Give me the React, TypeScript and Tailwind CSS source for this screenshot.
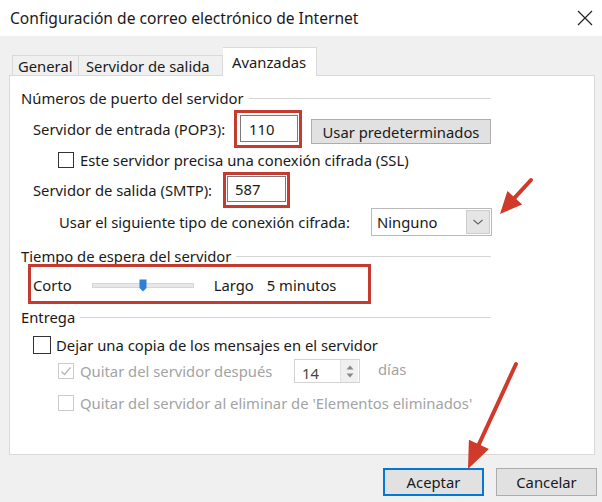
import React from "react";

const font = "font-['Noto_Sans',sans-serif]";

const SectionHeader = ({ title, className = "" }: { title: string; className?: string }) => (
  <div className={`flex items-center w-[470px] h-[20px] ${className}`}>
    <span className="leading-[20px] whitespace-nowrap">{title}</span>
    <div className="flex-1 h-px bg-[#d5d5d5] ml-[5px] mt-[1px]" />
  </div>
);

const CheckBox = ({
  checked = false,
  disabled = false,
  className = "",
}: {
  checked?: boolean;
  disabled?: boolean;
  className?: string;
}) => (
  <div
    className={`w-[16px] h-[16px] shrink-0 border flex items-center justify-center bg-white ${
      disabled ? "border-[#cccccc]" : "border-[#333333]"
    } ${className}`}
  >
    {checked && (
      <svg width="12" height="12" viewBox="0 0 12 12">
        <path d="M1.5 6.5 L4.5 9.5 L10.5 2.5" fill="none" stroke="#b5b5b5" strokeWidth="1.3" />
      </svg>
    )}
  </div>
);

export default function App() {
  return (
    <div className={`relative w-[602px] h-[502px] overflow-hidden bg-[#f0f0f0] text-[#1a1a1a] text-[14.8px] ${font}`}>
      {/* title bar */}
      <div className="h-[36px] bg-white flex items-center justify-between pl-[10px] pr-[9px]">
        <span className="text-[15.6px] leading-[20px]">
          Configuración de correo electrónico de Internet
        </span>
        <svg width="16" height="16" viewBox="0 0 16 16">
          <path d="M1 1 L15 15 M15 1 L1 15" stroke="#222" strokeWidth="1.2" />
        </svg>
      </div>

      {/* tabs */}
      <div className="flex items-end ml-[12px] mt-[11px] h-[28px] relative z-10">
        <div className="h-[20px] pl-[5px] border border-r-0 border-b-0 border-[#d9d9d9] bg-[#f0f0f0] flex items-center leading-[18px] w-[66px] whitespace-nowrap">
          General
        </div>
        <div className="h-[20px] pl-[7px] border border-b-0 border-[#d9d9d9] bg-[#f0f0f0] flex items-center leading-[18px] w-[145px] whitespace-nowrap">
          Servidor de salida
        </div>
        <div className="h-[29px] -mb-px pl-[9px] border border-l-0 border-b-0 border-[#d9d9d9] bg-white flex items-start pt-[4px] leading-[20px] w-[94px]">
          Avanzadas
        </div>
      </div>

      {/* panel */}
      <div className="ml-[9px] w-[586px] h-[380px] bg-white border border-[#d9d9d9] pl-[11px] pt-[12px] flex flex-col">
        <SectionHeader title="Números de puerto del servidor" />

        {/* POP3 */}
        <div className="flex items-start mt-[2px] h-[38px]">
          <span className="ml-[12px] w-[201px] mt-[9px] leading-[20px] whitespace-nowrap">Servidor de entrada (POP3):</span>
          <div className="border-[3px] border-[#c53b30] pt-[2px] pb-[3px] pl-[3px] pr-[1px]">
            <div className="w-[58px] h-[27px] border border-[#7a7a7a] bg-white flex items-center pl-[8px] leading-[20px]">
              110
            </div>
          </div>
          <div className="ml-[9px] mt-[9px] w-[180px] h-[25px] bg-[#e1e1e1] border border-[#adadad] flex items-center justify-center leading-[20px]">
            Usar predeterminados
          </div>
        </div>

        {/* SSL */}
        <div className="flex items-center mt-[3px] h-[18px]">
          <CheckBox className="ml-[37px]" />
          <span className="ml-[6px] leading-[20px]">Este servidor precisa una conexión cifrada (SSL)</span>
        </div>

        {/* SMTP */}
        <div className="flex items-center mt-[3px] h-[36px]">
          <span className="ml-[12px] w-[190px] leading-[20px] whitespace-nowrap">Servidor de salida (SMTP):</span>
          <div className="border-[3px] border-[#c53b30] pt-[1px] pb-[3px] pl-[1px] pr-[1px]">
            <div className="w-[59px] h-[26px] border border-[#7a7a7a] bg-white flex items-center pl-[7px] leading-[20px]">
              587
            </div>
          </div>
        </div>

        {/* encryption */}
        <div className="flex items-center h-[28px]">
          <span className="ml-[38px] w-[312px] leading-[20px] whitespace-nowrap">Usar el siguiente tipo de conexión cifrada:</span>
          <div className="w-[121px] h-[28px] border border-[#b9b9b9] bg-white flex items-center justify-between pl-[5px] pr-[1px]">
            <span className="leading-[20px]">Ninguno</span>
            <div className="w-[24px] h-[24px] bg-[#e5e5e5] border border-[#cccccc] flex items-center justify-center">
              <svg width="12" height="8" viewBox="0 0 12 8">
                <path d="M1.5 2 L6 6 L10.5 2" fill="none" stroke="#666" strokeWidth="1.1" />
              </svg>
            </div>
          </div>
        </div>

        <SectionHeader title="Tiempo de espera del servidor" className="mt-[10px]" />

        {/* timeout */}
        <div className="ml-[7px] -mt-[2px] w-[343px] h-[40px] border-[3px] border-[#c53b30] flex items-center pl-[2px] pt-[2px] relative z-10">
          <span className="leading-[20px]">Corto</span>
          <div className="relative ml-[20px] w-[102px] h-[5px] bg-[#e7e7e7] border border-[#d6d6d6]">
            <svg className="absolute left-[46px] -top-[5px]" width="8" height="13" viewBox="0 0 8 13">
              <path d="M0.5 0.5 H7.5 V9 L4 12.5 L0.5 9 Z" fill="#2f7ed8" />
            </svg>
          </div>
          <span className="ml-[20px] leading-[20px]">Largo</span>
          <span className="ml-[13px] leading-[20px]">5 minutos</span>
        </div>

        <SectionHeader title="Entrega" className="mt-[3px]" />

        <div className="flex items-center mt-[9px] h-[18px]">
          <CheckBox className="ml-[12px] w-[18px] h-[18px]" />
          <span className="ml-[5px] leading-[20px]">Dejar una copia de los mensajes en el servidor</span>
        </div>

        <div className="flex items-center mt-[5px] h-[24px] text-[#a3a3a3]">
          <CheckBox checked disabled className="ml-[37px]" />
          <span className="ml-[6px] w-[214px] leading-[20px] whitespace-nowrap">Quitar del servidor después</span>
          <div className="w-[66px] h-[24px] border border-[#d3d3d3] bg-white flex items-center justify-between">
            <span className="pl-[7px] pt-[3px] leading-[20px] text-[#444]">14</span>
            <div className="w-[18px] h-[22px] mr-[1px] bg-[#f0f0f0] border-l border-[#e2e2e2] flex flex-col items-center justify-center gap-[3px]">
              <svg width="8" height="5" viewBox="0 0 8 5">
                <path d="M0.5 4.5 L4 0.5 L7.5 4.5 Z" fill="#888" />
              </svg>
              <svg width="8" height="5" viewBox="0 0 8 5">
                <path d="M0.5 0.5 L4 4.5 L7.5 0.5 Z" fill="#888" />
              </svg>
            </div>
          </div>
          <span className="ml-[18px] -mt-[4px] leading-[20px]">días</span>
        </div>

        <div className="flex items-center mt-[11px] h-[18px] text-[#a3a3a3]">
          <CheckBox disabled className="ml-[37px]" />
          <span className="ml-[6px] leading-[20px] whitespace-nowrap">
            Quitar del servidor al eliminar de 'Elementos eliminados'
          </span>
        </div>
      </div>

      {/* dialog buttons */}
      <div className="flex justify-end gap-[12px] mt-[13px] pr-[5px]">
        <div className="w-[101px] h-[28px] bg-[#e1e1e1] border-2 border-[#0078d7] flex items-center justify-center leading-[20px]">
          Aceptar
        </div>
        <div className="w-[101px] h-[28px] bg-[#e1e1e1] border border-[#adadad] flex items-center justify-center leading-[20px]">
          Cancelar
        </div>
      </div>

      {/* annotation arrows */}
      <svg className="absolute left-0 top-0 pointer-events-none z-20" width="602" height="502" viewBox="0 0 602 502">
        <line x1="531" y1="180" x2="514.8" y2="197.7" stroke="#cf3a2b" strokeWidth="4" strokeLinecap="round" />
        <polygon points="500,214 522.2,204.4 507.4,191" fill="#cf3a2b" />
        <line x1="516" y1="364" x2="478.9" y2="444.4" stroke="#cf3a2b" strokeWidth="4" strokeLinecap="round" />
        <polygon points="468,469 488.9,449 468.9,439.8" fill="#cf3a2b" />
      </svg>
    </div>
  );
}
